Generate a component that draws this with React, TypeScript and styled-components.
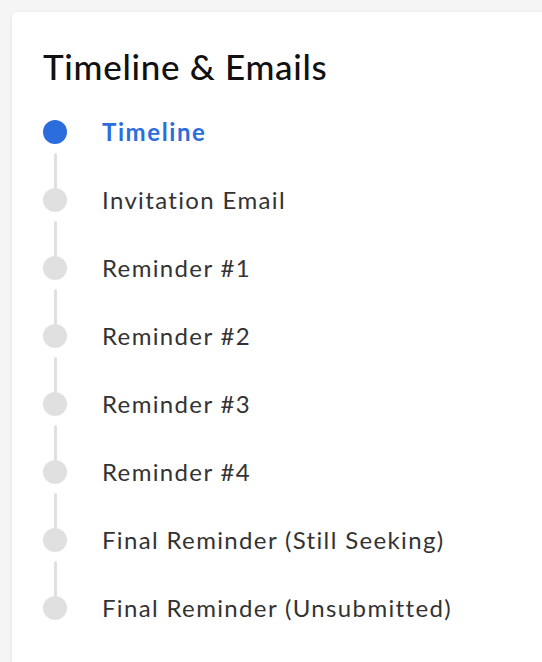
import styled, { createGlobalStyle } from 'styled-components';

const GlobalStyle = createGlobalStyle`
  html, body {
    margin: 0;
    padding: 0;
    background: #f5f5f5;
    overflow: hidden;
    font-family: Lato, "Liberation Sans", sans-serif;
  }
`;

const Card = styled.section`
  margin: 12px 0 0 12px;
  width: 600px;
  min-height: 700px;
  background: #fff;
  border-radius: 5px;
  box-shadow: 0 1px 4px rgb(0 0 0 / 8%);
  padding: 36px 0 0 31px;
  box-sizing: border-box;
`;

const Title = styled.h2`
  margin: 0 0 36px;
  font-size: 35px;
  line-height: 36px;
  font-weight: 500;
  letter-spacing: 0.7px;
  color: #111;
`;

const Steps = styled.ol`
  margin: 0;
  padding: 0;
  list-style: none;
`;

const Step = styled.li`
  display: flex;
  gap: 35px;
  height: 68px;

  &:last-child {
    height: 24px;
  }
`;

const Marker = styled.div`
  display: flex;
  flex-direction: column;
  align-items: center;
  width: 24px;
  flex: none;
`;

const Dot = styled.span<{ $active?: boolean }>`
  width: 24px;
  height: 24px;
  border-radius: 50%;
  background: ${(p) => (p.$active ? '#2b6ddd' : '#e0e0e0')};
`;

const Connector = styled.span`
  flex: 1;
  width: 3px;
  margin-top: 9px;
  background: #e0e0e0;
  border-radius: 2px 2px 0 0;

  li:last-child & {
    display: none;
  }
`;

const Label = styled.a<{ $active?: boolean }>`
  font-size: 24px;
  line-height: 24px;
  letter-spacing: ${(p) => (p.$active ? '1.6px' : '1.35px')};
  color: ${(p) => (p.$active ? '#2b6ddd' : '#333')};
  font-weight: ${(p) => (p.$active ? 700 : 400)};
  text-decoration: none;
  cursor: pointer;
`;

const steps = [
  'Timeline',
  'Invitation Email',
  'Reminder #1',
  'Reminder #2',
  'Reminder #3',
  'Reminder #4',
  'Final Reminder (Still Seeking)',
  'Final Reminder (Unsubmitted)',
];

const App: React.FC = () => {
  return (
    <>
      <GlobalStyle />
      <Card>
        <Title>Timeline &amp; Emails</Title>
        <Steps>
          {steps.map((s, i) => (
            <Step key={s}>
              <Marker>
                <Dot $active={i === 0} />
                <Connector />
              </Marker>
              <Label $active={i === 0}>{s}</Label>
            </Step>
          ))}
        </Steps>
      </Card>
    </>
  );
};

export default App;
